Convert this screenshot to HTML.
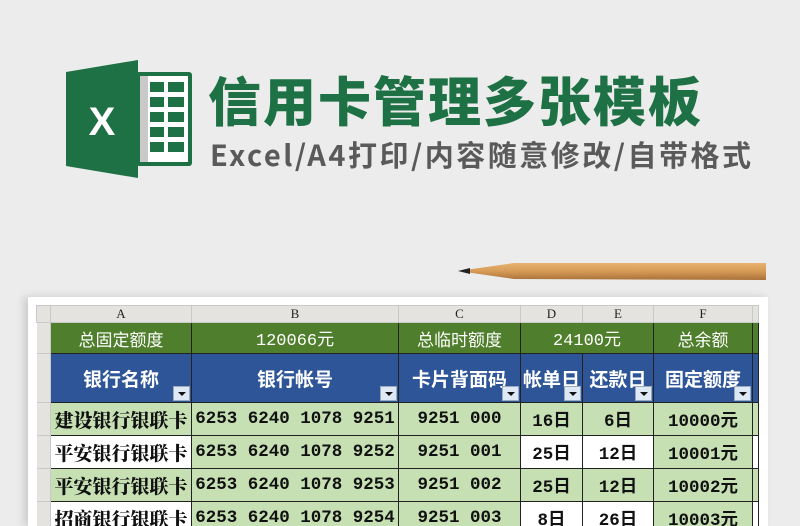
<!DOCTYPE html><html><head><meta charset="utf-8"><style>
html,body{margin:0;width:800px;height:526px;overflow:hidden}
body{background:#ececec;position:relative;font-family:"Liberation Mono","Noto Sans CJK SC",monospace}
.a{position:absolute}
table{border-collapse:collapse;table-layout:fixed;position:absolute;left:36px;top:305px}
td{border:1px solid #222;padding:0;text-align:center;font-weight:bold;font-size:17.5px;color:#111;overflow:hidden;white-space:nowrap;position:relative}
td.cn{font-family:"Noto Serif CJK SC",serif;font-size:19px;font-weight:900}
tr.h td{background:#e4e3df;border:1px solid #c8c8c8;font-size:13px;font-weight:normal;height:16px;color:#222;font-family:"Liberation Serif",serif}
tr.g td{background:#4f7f2c;color:#fff;height:30px;font-size:17px;font-weight:normal;font-family:"Noto Sans CJK SC",sans-serif}
tr.g td.n{font-family:"Liberation Mono","Noto Sans CJK SC",monospace}
tr.b td{background:#2e5598;color:#fff;height:48px;font-size:19px;font-family:"Noto Sans CJK SC",sans-serif}
tr.d td{background:#c6e0b4;height:32px}
tr.d td.w{background:#fff}
td.rh,tr.g td.rh,tr.b td.rh,tr.d td.rh{background:#e4e3df;border-color:#c8c8c8;border-left:none}
.dd{position:absolute;right:1px;bottom:1px;width:15px;height:13px;background:#dfe8f5;border:1px solid #9ab}
.dd:after{content:"";position:absolute;left:4px;top:5px;border:4px solid transparent;border-top:4px solid #111;border-bottom:none}
</style></head><body>
<svg class="a" style="left:66px;top:58px" width="130" height="122">
<rect x="70" y="14" width="56" height="94" rx="3" fill="#1e7145"/>
<rect x="74" y="18" width="48" height="86" fill="#fff"/>
<g fill="#1e7145"><rect x="84" y="24" width="14" height="10"/><rect x="102" y="24" width="16" height="10"/><rect x="84" y="39" width="14" height="10"/><rect x="102" y="39" width="16" height="10"/><rect x="84" y="54" width="14" height="10"/><rect x="102" y="54" width="16" height="10"/><rect x="84" y="69" width="14" height="10"/><rect x="102" y="69" width="16" height="10"/><rect x="84" y="84" width="14" height="10"/><rect x="102" y="84" width="16" height="10"/></g>
<rect x="74" y="18" width="8" height="86" fill="#c9c9c9"/>
<polygon points="0,14 72,2 72,120 0,108" fill="#1e7145"/>
<text x="36" y="77" font-family="Liberation Sans" font-weight="bold" font-size="40" fill="#fff" text-anchor="middle">X</text>
</svg>
<div class="a" style="left:208px;top:68px;font-family:'Noto Sans CJK SC',sans-serif;font-weight:900;font-size:53px;color:#1e7145;line-height:62px;letter-spacing:2px">信用卡管理多张模板</div>
<div class="a" style="left:210px;top:134px;font-family:'Noto Sans CJK SC',sans-serif;font-weight:bold;font-size:29px;color:#5a5a5a;line-height:40px;letter-spacing:2.5px">Excel/A4打印/内容随意修改/自带格式</div>
<svg class="a" style="left:456px;top:260px" width="314" height="24">
<defs><linearGradient id="p" x1="0" y1="0" x2="0" y2="1"><stop offset="0" stop-color="#e8b270"/><stop offset=".5" stop-color="#d69a55"/><stop offset="1" stop-color="#a9713a"/></linearGradient></defs>
<polygon points="2,11 58,3 310,3 310,20 58,19" fill="url(#p)"/>
<polygon points="2,11 14,8 14,14" fill="#222"/>
</svg>
<div class="a" style="left:28px;top:297px;width:740px;height:229px;background:#fff;box-shadow:-4px 0 8px rgba(0,0,0,.15)"></div>
<table>
<colgroup><col style="width:14px"><col style="width:141px"><col style="width:207px"><col style="width:122px"><col style="width:62px"><col style="width:71px"><col style="width:99px"><col style="width:6px"></colgroup>
<tr class="h"><td class="rh"></td><td>A</td><td>B</td><td>C</td><td>D</td><td>E</td><td>F</td><td></td></tr>
<tr class="g"><td class="rh"></td><td>总固定额度</td><td class="n">120066元</td><td>总临时额度</td><td colspan="2" class="n">24100元</td><td>总余额</td><td></td></tr>
<tr class="b"><td class="rh"></td><td>银行名称<span class="dd"></span></td><td>银行帐号<span class="dd"></span></td><td>卡片背面码<span class="dd"></span></td><td>帐单日<span class="dd"></span></td><td>还款日<span class="dd"></span></td><td>固定额度<span class="dd"></span></td><td></td></tr>
<tr class="d"><td class="rh"></td><td class="cn">建设银行银联卡</td><td>6253 6240 1078 9251</td><td>9251 000</td><td>16日</td><td>6日</td><td>10000元</td><td></td></tr>
<tr class="d"><td class="rh"></td><td class="cn w">平安银行银联卡</td><td>6253 6240 1078 9252</td><td>9251 001</td><td class="w">25日</td><td class="w">12日</td><td>10001元</td><td class="w"></td></tr>
<tr class="d"><td class="rh"></td><td class="cn">平安银行银联卡</td><td>6253 6240 1078 9253</td><td>9251 002</td><td>25日</td><td>12日</td><td>10002元</td><td></td></tr>
<tr class="d"><td class="rh"></td><td class="cn w">招商银行银联卡</td><td>6253 6240 1078 9254</td><td>9251 003</td><td class="w">8日</td><td class="w">26日</td><td>10003元</td><td class="w"></td></tr>
</table>
</body></html>
